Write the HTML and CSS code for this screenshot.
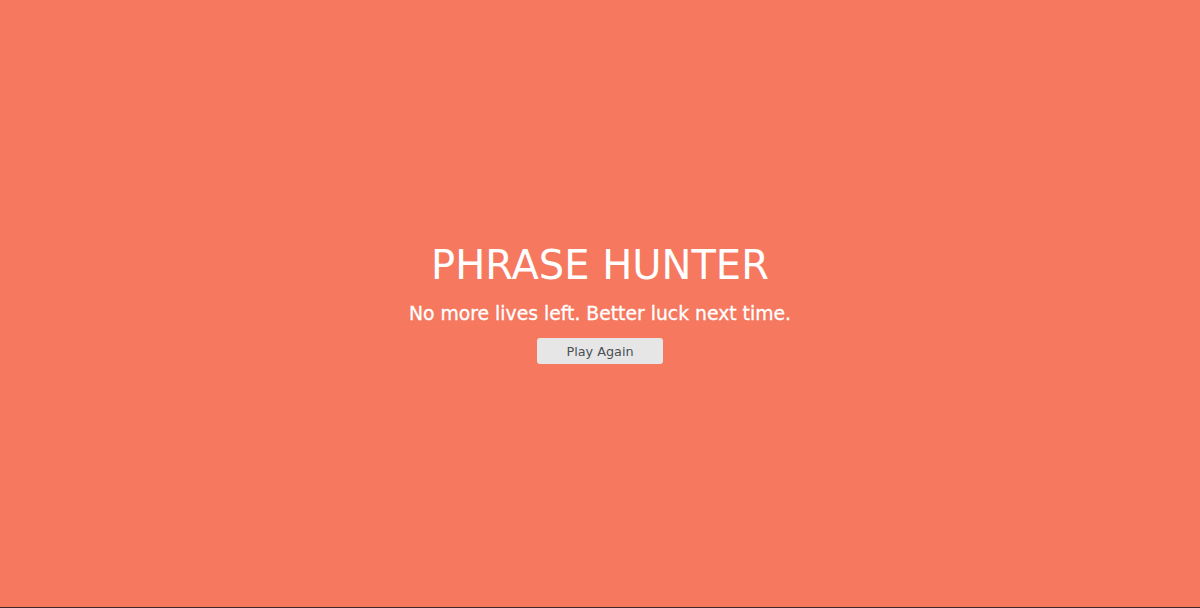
FILE: index.html
```html
<!DOCTYPE html>
<html lang="en">
<head>
<meta charset="utf-8">
<title>Phrase Hunter</title>
<link rel="stylesheet" href="styles.css">
</head>
<body>
<div class="overlay lose">
  <h2 class="title">PHRASE HUNTER</h2>
  <h1 class="game-over-message">No more lives left. Better luck next time.</h1>
  <button class="btn-reset">Play Again</button>
</div>
<div class="edge"></div>
</body>
</html>
```
FILE: styles.css
```css
html, body {
  margin: 0;
  padding: 0;
  height: 100%;
}
body {
  font-family: "DejaVu Sans", "Open Sans", sans-serif;
  background: #f5785f;
  display: flex;
  flex-direction: column;
  overflow: hidden;
}
.overlay {
  flex: 1;
  display: flex;
  flex-direction: column;
  align-items: center;
  justify-content: center;
  color: #fff;
  padding-bottom: 2px;
}
.title {
  margin: 0;
  font-weight: 400;
  font-size: 40px;
  line-height: 48px;
}
.game-over-message {
  margin: 12px 0 11px;
  font-weight: 500;
  font-size: 18.8px;
  line-height: 26px;
  -webkit-text-stroke: 0.3px #fff;
}
.btn-reset {
  width: 126px;
  height: 26px;
  border: 0;
  border-radius: 3px;
  background: #e6e6e6;
  color: #4a4f55;
  font-family: inherit;
  font-size: 12.8px;
  padding: 0;
}
.edge {
  height: 1px;
  background: #3c2a25;
}
```
